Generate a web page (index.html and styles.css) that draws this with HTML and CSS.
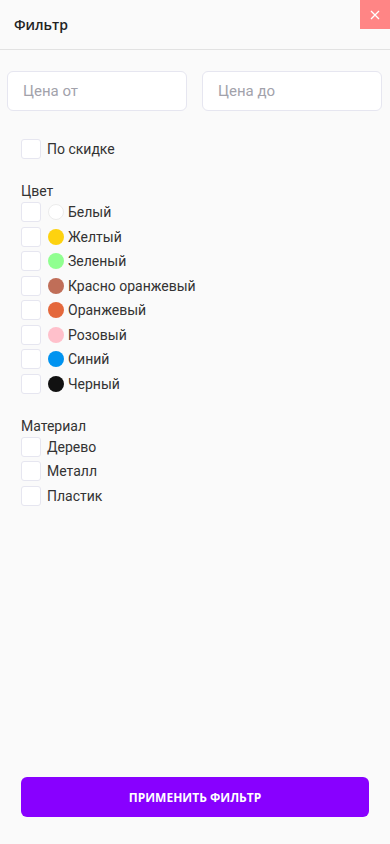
FILE: index.html
```html
<!DOCTYPE html>
<html lang="ru">
<head>
<meta charset="utf-8">
<title>Фильтр</title>
<link rel="stylesheet" href="styles.css">
</head>
<body>
<div class="page">
  <header class="header">
    <h1 class="title">Фильтр</h1>
    <button class="close" aria-label="Закрыть">
      <svg width="10" height="10" viewBox="0 0 10 10"><path d="M1 1L9 9M9 1L1 9" stroke="#fff" stroke-width="1.3" fill="none"/></svg>
    </button>
  </header>
  <main class="content">
    <div class="prices">
      <input class="price" type="text" placeholder="Цена от">
      <input class="price" type="text" placeholder="Цена до">
    </div>
    <label class="row discount"><span class="box"></span><span class="label">По скидке</span></label>

    <section class="group">
      <div class="group-title">Цвет</div>
      <div class="rows">
        <label class="row"><span class="box"></span><span class="dot white"></span><span class="label">Белый</span></label>
        <label class="row"><span class="box"></span><span class="dot yellow"></span><span class="label">Желтый</span></label>
        <label class="row"><span class="box"></span><span class="dot green"></span><span class="label">Зеленый</span></label>
        <label class="row"><span class="box"></span><span class="dot redorange"></span><span class="label">Красно оранжевый</span></label>
        <label class="row"><span class="box"></span><span class="dot orange"></span><span class="label">Оранжевый</span></label>
        <label class="row"><span class="box"></span><span class="dot pink"></span><span class="label">Розовый</span></label>
        <label class="row"><span class="box"></span><span class="dot blue"></span><span class="label">Синий</span></label>
        <label class="row"><span class="box"></span><span class="dot black"></span><span class="label">Черный</span></label>
      </div>
    </section>

    <section class="group">
      <div class="group-title">Материал</div>
      <div class="rows">
        <label class="row"><span class="box"></span><span class="label mat">Дерево</span></label>
        <label class="row"><span class="box"></span><span class="label mat">Металл</span></label>
        <label class="row"><span class="box"></span><span class="label mat">Пластик</span></label>
      </div>
    </section>
  </main>
  <footer class="footer">
    <button class="apply">ПРИМЕНИТЬ ФИЛЬТР</button>
  </footer>
</div>
</body>
</html>
```

FILE: styles.css
```css
* { box-sizing: border-box; }
html, body { margin: 0; padding: 0; }
body {
  background: #fafafa;
  font-family: Roboto, "Liberation Sans", Arial, sans-serif;
  color: #333;
}
.page {
  width: 390px;
  height: 844px;
  display: flex;
  flex-direction: column;
}
.header {
  height: 50px;
  border-bottom: 1px solid #e2e2e2;
  display: flex;
  align-items: flex-start;
  justify-content: space-between;
}
.title {
  margin: 0;
  padding: 15px 0 0 14px;
  font-family: "Open Sans", "Noto Sans", sans-serif;
  font-weight: 600;
  font-size: 14px;
  line-height: 19px;
  color: #222;
}
.close {
  width: 30px;
  height: 29px;
  border: 0;
  padding: 0;
  background: #ff8585;
  display: flex;
  align-items: center;
  justify-content: center;
  cursor: pointer;
}
.content {
  flex: 1;
  padding: 21px 0 0 0;
}
.prices {
  display: flex;
  gap: 15px;
  padding: 0 8px 0 7px;
}
.price {
  width: 180px;
  height: 40px;
  border: 1px solid #e6e6f0;
  border-radius: 6px;
  background: #fff;
  padding: 0 15px;
  font-family: Roboto, "Liberation Sans", sans-serif;
  font-size: 15px;
  color: #333;
  outline: none;
}
.price::placeholder { color: #a2a2ab; }
.row {
  display: flex;
  align-items: center;
  height: 20px;
  padding-left: 21px;
}
.discount { margin-top: 28px; }
.box {
  width: 20px;
  height: 20px;
  border: 1px solid #e6e6f0;
  border-radius: 3px;
  background: #fff;
  flex: none;
}
.dot {
  width: 16px;
  height: 16px;
  border-radius: 50%;
  margin-left: 7px;
  flex: none;
}
.dot.white { background: #fff; border: 1px solid #ececec; }
.dot.yellow { background: #fdd20f; }
.dot.green { background: #90ff90; }
.dot.redorange { background: #c06e58; }
.dot.orange { background: #e4683c; }
.dot.pink { background: #ffc0cb; }
.dot.blue { background: #0093f0; }
.dot.black { background: #111111; }
.label {
  font-size: 14px;
  line-height: 20px;
  color: #333;
  margin-left: 4px;
}
.discount .label, .label.mat { margin-left: 6px; }
.group { margin-top: 23px; }
.group-title {
  padding-left: 21px;
  font-size: 14px;
  line-height: 18px;
  color: #333;
  margin-bottom: 2px;
}
.rows {
  display: flex;
  flex-direction: column;
  gap: 4.5px;
}
.footer {
  padding: 0 21px 27px 21px;
}
.apply {
  width: 348px;
  height: 40px;
  border: 0;
  border-radius: 6px;
  background: #8800ff;
  color: #fff;
  font-family: "Open Sans", "Noto Sans", sans-serif;
  font-weight: 700;
  font-size: 12px;
  cursor: pointer;
}
```
